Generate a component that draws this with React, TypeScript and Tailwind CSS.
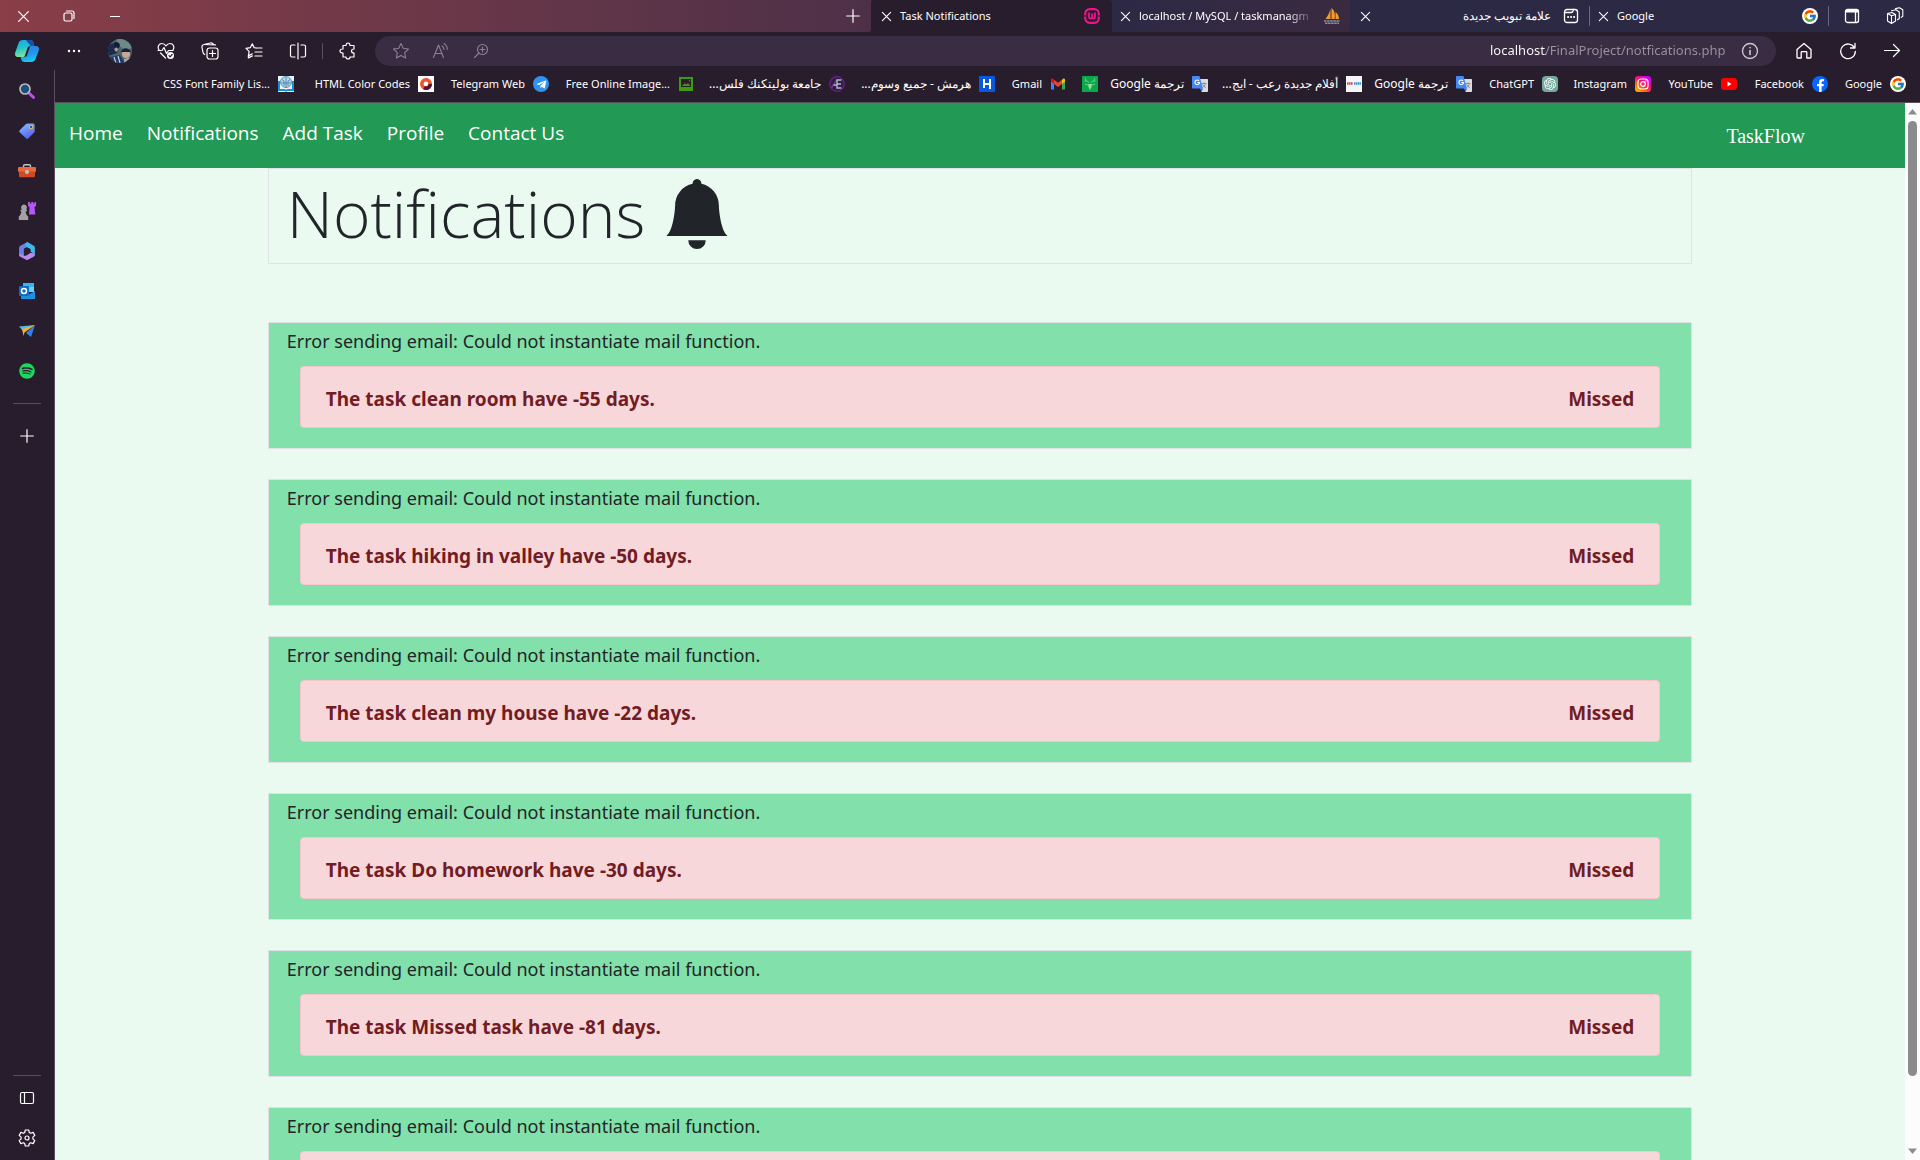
import React from "react";
import { FcGoogle } from "react-icons/fc";
import { BsBellFill } from "react-icons/bs";
import { FaFacebookF, FaSpotify, FaTelegramPlane } from "react-icons/fa";
import { SiOpenai } from "react-icons/si";

type Icon = React.ReactNode;

const stroke = {
  fill: "none",
  stroke: "currentColor",
  strokeLinecap: "round" as const,
  strokeLinejoin: "round" as const,
};

/* ---------- toolbar icons ---------- */

const CloseIcon = ({ size = 11 }: { size?: number }) => (
  <svg width={size} height={size} viewBox="0 0 12 12" {...stroke} strokeWidth={1.2}>
    <path d="M1.5 1.5l9 9M10.5 1.5l-9 9" />
  </svg>
);

const CopilotIcon = () => (
  <svg width="26" height="24" viewBox="0 0 26 24">
    <defs>
      <linearGradient id="cpA" x1="0" y1="0" x2="0.2" y2="1">
        <stop offset="0" stopColor="#1aa7ea" />
        <stop offset="0.5" stopColor="#22c3c8" />
        <stop offset="1" stopColor="#7fe3a0" />
      </linearGradient>
      <linearGradient id="cpB" x1="0" y1="0" x2="0.3" y2="1">
        <stop offset="0" stopColor="#2f7be8" />
        <stop offset="0.6" stopColor="#2196ea" />
        <stop offset="1" stopColor="#18c8ee" />
      </linearGradient>
    </defs>
    <path d="M9 1h7c2 0 3 1.200 3.500 3l.7 2.500h-3.200c-1.800 0-2.800 1-3.300 2.800L12 15.500C11.500 17 10.500 18 9 18H4c-2.500 0-3.500-2-2.800-4.500L4.600 4C5.200 2 6.800 1 9 1z" fill="url(#cpA)" />
    <path d="M12 1h4c2 0 3 1.200 3.500 3l.7 2.500h-3.500C15 5 13.500 3 12 1z" fill="#1450a8" />
    <path d="M17 7h5c2.500 0 3.500 2 2.800 4.500L21.500 20c-.6 2-2 3-4 3h-7c-1.800 0-2.800-1-3.300-2.800L6.600 18H9c1.800 0 2.800-1 3.300-2.600l1.700-5.900C14.500 8 15.500 7 17 7z" fill="url(#cpB)" />
    <path d="M16 8l-3.500 9.500h-2L14 8z" fill="#281d2c" />
  </svg>
);

const Avatar = () => (
  <svg width="24" height="24" viewBox="0 0 24 24">
    <clipPath id="av"><circle cx="12" cy="12" r="12" /></clipPath>
    <g clipPath="url(#av)">
      <rect width="24" height="24" fill="#4c6470" />
      <path d="M8 0h16v9l-7 2-7-5z" fill="#6c8a88" />
      <path d="M0 6l6-2 4 3-1 7-9 3z" fill="#1c2b4d" />
      <path d="M6 10l3-2 1 3-2 2z" fill="#b89a90" />
      <path d="M6 4c2-2 5-1 6 2l-1 3-4-1z" fill="#131c33" />
      <circle cx="18" cy="15" r="4" fill="#c9a795" />
      <path d="M13 13c1-5 8-5 10 0l-5 0z" fill="#1a2038" />
      <path d="M2 18l10-2 5 8H3z" fill="#233763" />
      <path d="M6 18l2 6M10 17l2 7" stroke="#c3cede" strokeWidth="1.200" />
      <path d="M16 20l8-2v6h-8z" fill="#a8a7a0" />
    </g>
  </svg>
);

const HeartPulseIcon = () => (
  <svg width="18" height="18" viewBox="0 0 18 18" {...stroke} strokeWidth={1.2}>
    <path d="M2 8C0 4.500 2 1.500 5 1.500c1.800 0 3 1 4 2.300 1-1.300 2.200-2.300 4-2.300 3 0 5 3 3 6.500M3.500 11l5 5" />
    <path d="M1 8.500h4l2-3 2.500 6 2-3h4.500" />
    <circle cx="13.500" cy="13.500" r="3.500" fill="#fff" stroke="none" />
    <path d="M12 13.700l1.100 1.100 2-2.300" stroke="#281d2c" />
  </svg>
);

const CollectionsIcon = () => (
  <svg width="18" height="18" viewBox="0 0 18 18" {...stroke} strokeWidth={1.2}>
    <rect x="6" y="6" width="11" height="11" rx="2.500" />
    <path d="M11.500 8.500v6M8.500 11.500h6M3.800 12.500C2.500 12 2.200 11.300 2 10.300L1 5.500C.7 4 1.500 2.800 3 2.500L9.500 1c1.500-.3 2.700.4 3.200 2M3.500 2.500l11 .3" />
  </svg>
);

const FavoritesIcon = () => (
  <svg width="18" height="18" viewBox="0 0 18 18" {...stroke} strokeWidth={1.2}>
    <path d="M11 6L9.200 5.700 7.300 1.800 5.300 5.700 1 6.400l3.100 3-.7 4.500 3.900-2.100" />
    <path d="M11.500 6h5.500M10 10h7M10 14h7M3.400 13.900v2l4-2" />
  </svg>
);

const SplitIcon = () => (
  <svg width="18" height="18" viewBox="0 0 18 18" {...stroke} strokeWidth={1.2}>
    <path d="M6 3H3C2 3 1.500 3.500 1.500 4.500v9c0 1 .5 1.500 1.500 1.500h3M12 3h3c1 0 1.500.5 1.500 1.500v9c0 1-.5 1.500-1.500 1.500h-3M9 1v16" />
  </svg>
);

const PuzzleIcon = () => (
  <svg width="18" height="18" viewBox="0 0 18 18" {...stroke} strokeWidth={1.200}>
    <path d="M4 3.500h3c0-1.700.9-2.500 2-2.500s2 .8 2 2.500h4V7c-1.700 0-2.500.9-2.500 2s.8 2 2.500 2v4h-4c0 1.300-.9 2-2 2s-2-.7-2-2H4v-4c-1.800 0-3-.7-3-2s1.200-2 3-2z" />
  </svg>
);

const StarIcon = () => (
  <svg width="18" height="18" viewBox="0 0 18 18" {...stroke} strokeWidth={1.100}>
    <path d="M9 1.500l2.300 4.800 5.200.7-3.800 3.700.9 5.300L9 13.500 4.400 16l.9-5.300L1.500 7l5.200-.7z" />
  </svg>
);

const ReadAloudIcon = () => (
  <svg width="18" height="18" viewBox="0 0 18 18" {...stroke} strokeWidth={1.100}>
    <path d="M1.500 15.500L6.500 3l5 12.500M3.200 11.500h6.600M10 4c1.500.8 2 2 2 3.500M12 1.500c2.200 1.300 3.300 3.500 3.200 6" />
  </svg>
);

const ZoomIcon = () => (
  <svg width="16" height="16" viewBox="0 0 16 16" {...stroke} strokeWidth={1.100}>
    <circle cx="9.500" cy="6.500" r="5" />
    <path d="M9.500 4v5M7 6.500h5M6 10l-4.500 4.500" />
  </svg>
);

const InfoIcon = () => (
  <svg width="18" height="18" viewBox="0 0 18 18" {...stroke} strokeWidth={1.300}>
    <circle cx="9" cy="9" r="7.500" />
    <path d="M9 8.500v4M9 5.500v.2" strokeWidth={1.600} />
  </svg>
);

const HomeIcon = () => (
  <svg width="18" height="18" viewBox="0 0 18 18" {...stroke} strokeWidth={1.300}>
    <path d="M2 7.500L9 1.500l7 6v7.700c0 .5-.3.800-.8.800h-3.400v-5.500c0-.5-.3-.8-.8-.8H7c-.5 0-.8.300-.8.800V16H2.800c-.5 0-.8-.3-.8-.8z" />
  </svg>
);

const ReloadIcon = () => (
  <svg width="18" height="18" viewBox="0 0 18 18" {...stroke} strokeWidth={1.300}>
    <path d="M15.500 6A7.300 7.300 0 1 0 16.300 9.500M16 1.500V6h-4.500" />
  </svg>
);

const ForwardIcon = () => (
  <svg width="18" height="18" viewBox="0 0 18 18" {...stroke} strokeWidth={1.200}>
    <path d="M1.500 8.500h15M10.500 2.500l6 6-6 6" />
  </svg>
);

/* ---------- site icons, 16px ---------- */

const box = { width: 16, height: 16, viewBox: "0 0 16 16" };

const GoogleBadge = () => (
  <span className="flex h-4 w-4 shrink-0 items-center justify-center rounded-full bg-white">
    <FcGoogle size={14} />
  </span>
);

const FacebookBadge = () => (
  <span className="flex h-4 w-4 shrink-0 items-end justify-center overflow-hidden rounded-full bg-[#0866ff] text-white">
    <FaFacebookF size={13} />
  </span>
);

const YouTubeBadge = () => (
  <svg {...box}><rect y="2" width="16" height="12" rx="3" fill="#f00" /><path d="M6.500 5.500v5l4-2.500z" fill="#fff" /></svg>
);

const InstagramBadge = () => (
  <svg {...box}>
    <defs>
      <linearGradient id="ig" x1="0" y1="1" x2="0.800" y2="0">
        <stop offset="0" stopColor="#ffc800" />
        <stop offset="0.350" stopColor="#ff6a00" />
        <stop offset="0.600" stopColor="#ff0f70" />
        <stop offset="1" stopColor="#c800ff" />
      </linearGradient>
    </defs>
    <rect width="16" height="16" rx="3" fill="url(#ig)" />
    <rect x="3" y="3" width="10" height="10" rx="3" fill="none" stroke="#fff" strokeWidth="1.200" />
    <circle cx="8" cy="8" r="2.300" fill="none" stroke="#fff" strokeWidth="1.200" />
    <circle cx="11" cy="5" r="0.700" fill="#fff" />
  </svg>
);

const ChatBadge = () => (
  <span className="flex h-4 w-4 shrink-0 items-center justify-center rounded-sm bg-[#74aa9c] text-white">
    <SiOpenai size={12} />
  </span>
);

const TranslateBadge = () => (
  <svg {...box}>
    <path d="M6 3h9c.600 0 1 .400 1 1v11c0 .600-.400 1-1 1H9.500z" fill="#dcdcdc" />
    <path d="M9.500 7.500h5M12 6.500v1M13.500 7.500c-.5 2-2 3.500-3.500 4.500M10.700 8.500c.8 1.600 2 2.700 3.300 3.500" fill="none" stroke="#7a8a96" strokeWidth="0.900" />
    <path d="M8 12.500h3L9.500 16z" fill="#3367d6" />
    <path d="M1 0h6.500L11 12.500H1c-.600 0-1-.4-1-1V1c0-.6.400-1 1-1z" fill="#4587f4" />
    <path d="M7 4.800A2.300 2.300 0 1 0 7.500 6.500H5.300" fill="none" stroke="#fff" strokeWidth="1.100" />
  </svg>
);

const CinemaBadge = () => (
  <svg {...box}>
    <rect width="16" height="16" fill="#f5f5f8" />
    <path d="M1 7.500h6" stroke="#d8484a" strokeWidth="2.600" strokeDasharray="1.500 .4" />
    <path d="M8 7.500h7" stroke="#3a94d8" strokeWidth="2.600" strokeDasharray="1.500 .4" />
  </svg>
);

const DeerBadge = () => (
  <svg {...box}>
    <rect width="16" height="16" fill="#0ba84a" />
    <path d="M3 2l1.500 3L7 6.500M13 2l-1.500 3L9 6.500M2.500 5h2M13.500 5h-2M3 8l3 1M13 8l-3 1" stroke="#6fd491" strokeWidth="0.900" fill="none" />
    <path d="M6 8h4l-.5 3L8 14l-1.500-3z" fill="#8fe0a8" />
  </svg>
);

const GmailBadge = () => (
  <svg {...box}>
    <path d="M1 4v9.500h3V6.500z" fill="#4285f4" />
    <path d="M15 4v9.500h-3V6.500z" fill="#34a853" />
    <path d="M12 3.800V8l3-2.300V4c0-1.800-1.700-2.200-3-.2z" fill="#fbbc04" />
    <path d="M4 3.800V8L1 5.700V4c0-1.800 1.700-2.200 3-.2z" fill="#c5221f" />
    <path d="M4 3.700L8 6.800l4-3.100V8l-4 3-4-3z" fill="#ea4335" />
  </svg>
);

const HermesBadge = () => (
  <svg {...box}>
    <rect width="16" height="16" rx="1" fill="#0759e0" />
    <path d="M5 3v9M11 3v10M5 8h6" stroke="#fff" strokeWidth="2" fill="none" />
  </svg>
);

const PolytechnicBadge = () => (
  <svg {...box}>
    <circle cx="8" cy="8" r="7.300" fill="#2c2145" stroke="#6a1f8c" strokeWidth="1.300" />
    <path d="M2.500 12L7.500 4" stroke="#8a2bb0" strokeWidth="1.300" />
    <path d="M12.500 4H8v8h4.500M8 8h4M4.500 9H8" stroke="#b9b3c4" strokeWidth="1.400" fill="none" />
  </svg>
);

const ImageBadge = () => (
  <svg {...box}>
    <path d="M1 1h14v14H1z" fill="#3f9a10" />
    <path d="M3 3h10v8H3z" fill="#281d2c" />
    <path d="M4 10l2.500-2.800 1.700 1.300L10 7l2.500 3z" fill="#3f9a10" />
    <circle cx="11.500" cy="4.800" r="0.700" fill="#3f9a10" />
  </svg>
);

const TelegramBadge = () => (
  <span className="flex h-4 w-4 shrink-0 items-center justify-center rounded-full bg-[#2f93f3] text-white">
    <FaTelegramPlane size={11} />
  </span>
);

const ColorRingBadge = () => (
  <svg {...box}>
    <rect width="16" height="16" fill="#fff" />
    <circle cx="8" cy="8" r="4.200" fill="none" stroke="#f0532d" strokeWidth="3.600" />
    <path d="M12.200 8A4.200 4.200 0 0 1 6 11.700" fill="none" stroke="#5a1238" strokeWidth="3.600" />
  </svg>
);

const BookBadge = () => (
  <svg {...box}>
    <rect width="16" height="16" fill="#e6f3fa" />
    <path d="M0 5h2v8h5l1 1 1-1h5V5h2v10H9l-1 1-1-1H0z" fill="#1c8ed0" />
    <circle cx="8" cy="6" r="5.500" fill="#b9d8ea" stroke="#4d84aa" strokeWidth="0.800" />
    <path d="M8 1v11M4 3.500l2 1.500v5M12 3.500L10 5v5M3 7h10" stroke="#3f79a4" strokeWidth="0.800" fill="none" />
  </svg>
);

const WampBadge = () => (
  <svg {...box} fill="none" stroke="#f0118c">
    <rect x="1.200" y="1.200" width="13.600" height="13.600" rx="4.500" strokeWidth="2.200" />
    <path d="M5 4.500v4.500c0 1 .5 1.500 1.500 1.500S8 10 8 9V5.500V9c0 1 .5 1.500 1.500 1.500S11 10 11 9V4.500" strokeWidth="1.800" />
    <path d="M0 8h2.500M13.500 8H16" stroke="#281d2c" strokeWidth="1" />
  </svg>
);

const SailBadge = () => (
  <svg {...box}>
    <path d="M6.500 1v10H1.500C3.500 8 5.500 5 6.500 1zM7.500 0c3 2 4 7 3 11h-3zM11.500 4c2.500 2 3.500 4.500 3.500 7h-3.500z" fill="#f59a22" />
    <path d="M0 13h16M1 15.300h14" stroke="#8b90a8" strokeWidth="1.500" strokeDasharray="2.500 .6" />
  </svg>
);

const NewTabIcon = () => (
  <svg {...box} {...stroke} strokeWidth={1.300}>
    <rect x="1.500" y="1.500" width="13" height="13" rx="2.500" />
    <path d="M1.500 4.500h7c1 0 1.200-.5 1.500-1.500l.3-1.500" />
    <path d="M5 9h.2M8 9h.2M11 9h.2" strokeWidth={1.900} />
  </svg>
);

/* ---------- sidebar icons ---------- */

const SearchApp = () => (
  <svg {...box}>
    <path d="M10.500 10.500l4 4" stroke="#c84df0" strokeWidth="2.800" strokeLinecap="round" />
    <circle cx="6" cy="6" r="5" fill="#1d4f7c" stroke="#b9bcc0" strokeWidth="1.700" />
  </svg>
);

const TagApp = () => (
  <svg {...box}>
    <defs><linearGradient id="tg" x1="0" y1="0" x2="0.500" y2="1"><stop offset="0" stopColor="#84c4ff" /><stop offset="1" stopColor="#5a62f2" /></linearGradient></defs>
    <path d="M8.500.500H14c1 0 1.700.700 1.700 1.700v6c0 .6-.2 1-.6 1.400l-5.600 5.600c-.8.800-1.800.8-2.600 0L.900 9.500c-.8-.8-.8-1.800 0-2.600L7 1.100c.4-.4.9-.6 1.500-.6z" fill="url(#tg)" />
    <circle cx="12" cy="4" r="1.700" fill="#374b8c" stroke="#f1b62c" strokeWidth="1.100" />
  </svg>
);

const ToolboxApp = () => (
  <svg width="18" height="16" viewBox="0 0 18 16">
    <path d="M5.500 5V3c0-.8.5-1.300 1.300-1.300h4.400c.8 0 1.300.5 1.300 1.300v2" fill="none" stroke="#c4c1c1" strokeWidth="1.400" />
    <rect y="4" width="18" height="5" rx="1" fill="#ea6a3c" />
    <path d="M1 8.500h16V13c0 .800-.500 1.300-1.300 1.300H2.300C1.500 14.300 1 13.800 1 13z" fill="#cf4a22" />
    <circle cx="9" cy="9" r="2" fill="#c4c1c1" />
  </svg>
);

const GamesApp = () => (
  <svg width="18" height="18" viewBox="0 0 18 18">
    <path d="M10 0h2v1.500h1.300V0h2v1.500h1.200V0H18v4l-1.500 1 .8 7.500H11L11.500 5 10 4z" fill="#b556f5" />
    <path d="M6 2.500a3 3 0 0 1 2 5.200h1v1.500H7.700c.1 2.500.8 3.800 2.500 5.300V18H.8v-3.500c1.700-1.500 2.400-2.800 2.500-5.300H2.500V7.700H4A3 3 0 0 1 6 2.500z" fill="#a3a1a5" />
  </svg>
);

const M365App = () => (
  <svg width="18" height="18" viewBox="0 0 16 16">
    <path d="M8.500 0L1.700 3.600C1.200 4 1 4.300 1 5v6.500L5.300 14V6L9 4z" fill="#6f7fe6" />
    <path d="M8.500 0l5.800 3.600c.5.400.7.700.7 1.400v6l-4-2.500V6.300L6.500 4V1z" fill="#43b7ea" />
    <path d="M15 10.500v1c0 .6-.2 1-.7 1.300l-5.500 3c-.5.300-1.100.300-1.600 0L1.700 12.800C1.200 12.500 1 12 1 11.500V10l4 2.500 2.500-.5L11 9.500z" fill="#b48cf0" />
    <path d="M8 4.800l3 1.700v3L8 11.300 5.200 9.500v-3z" fill="#281d2c" />
  </svg>
);

const OutlookApp = () => (
  <svg {...box}>
    <path d="M4 0h11v9H4z" fill="#36b5f2" />
    <path d="M9 4h6v5H9z" fill="#64d0fb" />
    <path d="M2 8l7 4 7-4v8H3c-.6 0-1-.4-1-1z" fill="#1b8fe0" />
    <rect y="3" width="10" height="10" rx="1" fill="#0a6dc7" />
    <circle cx="5" cy="8" r="2.500" fill="none" stroke="#fff" strokeWidth="1.500" />
  </svg>
);

const DropApp = () => (
  <svg {...box}>
    <path d="M0 3.500L16 2 5 9z" fill="#54b7f5" />
    <path d="M16 2l-4 12-5-4z" fill="#2f83e6" />
    <path d="M3 6L16 2 5.500 9.500 4.500 13z" fill="#f2b22a" />
  </svg>
);

const PlusIcon = () => (
  <svg width="14" height="14" viewBox="0 0 14 14" {...stroke} strokeWidth={1.200}>
    <path d="M7 .7v12.600M.7 7h12.600" />
  </svg>
);

const PanelIcon = () => (
  <svg width="16" height="16" viewBox="0 0 16 16" {...stroke} strokeWidth={1.200}>
    <rect x="1.500" y="2.500" width="13" height="11" rx="1.500" />
    <path d="M5.500 2.500v11" />
  </svg>
);

const GearIcon = () => (
  <svg width="18" height="18" viewBox="0 0 18 18" {...stroke} strokeWidth={1.200}>
    <path d="M7.300 1h3.400l.6 2.500 1.300.8 2.500-.9 1.700 3-1.900 1.700v1.800l1.900 1.700-1.700 3-2.500-.9-1.300.8-.6 2.500H7.300l-.6-2.500-1.300-.8-2.500.9-1.700-3 1.900-1.700V8.100L1.200 6.400l1.700-3 2.500.9 1.300-.8z" />
    <circle cx="9" cy="9" r="2" />
  </svg>
);

/* ---------- data ---------- */

const bookmarks: { label: string; icon: Icon; width: string; arabic?: boolean }[] = [
  { label: "CSS Font Family Lis...", icon: <BookBadge />, width: "w-[140px]" },
  { label: "HTML Color Codes", icon: <ColorRingBadge />, width: "w-[140px]" },
  { label: "Telegram Web", icon: <TelegramBadge />, width: "w-[115px]" },
  { label: "Free Online Image...", icon: <ImageBadge />, width: "w-[145px]" },
  { label: "جامعة بوليتكنك فلس...", icon: <PolytechnicBadge />, width: "w-[151px]", arabic: true },
  { label: "هرمش - جميع وسوم...", icon: <HermesBadge />, width: "w-[150px]", arabic: true },
  { label: "Gmail", icon: <GmailBadge />, width: "w-[71px]" },
  { label: "", icon: <DeerBadge />, width: "w-[32px]" },
  { label: "ترجمة Google", icon: <TranslateBadge />, width: "w-[110px]", arabic: true },
  { label: "أفلام جديدة رعب - ايج...", icon: <CinemaBadge />, width: "w-[154px]", arabic: true },
  { label: "ترجمة Google", icon: <TranslateBadge />, width: "w-[110px]", arabic: true },
  { label: "ChatGPT", icon: <ChatBadge />, width: "w-[86px]" },
  { label: "Instagram", icon: <InstagramBadge />, width: "w-[93px]" },
  { label: "YouTube", icon: <YouTubeBadge />, width: "w-[86px]" },
  { label: "Facebook", icon: <FacebookBadge />, width: "w-[91px]" },
  { label: "Google", icon: <GoogleBadge />, width: "w-[78px]" },
];

const apps: { name: string; icon: Icon }[] = [
  { name: "Search", icon: <SearchApp /> },
  { name: "Shopping", icon: <TagApp /> },
  { name: "Tools", icon: <ToolboxApp /> },
  { name: "Games", icon: <GamesApp /> },
  { name: "Microsoft 365", icon: <M365App /> },
  { name: "Outlook", icon: <OutlookApp /> },
  { name: "Drop", icon: <DropApp /> },
  { name: "Spotify", icon: <FaSpotify size={16} className="text-[#1ed760]" /> },
];

const tools: { name: string; icon: Icon; width: string }[] = [
  { name: "More", icon: <svg width="14" height="4" viewBox="0 0 14 4" fill="#fff"><circle cx="2" cy="2" r="1.200" /><circle cx="7" cy="2" r="1.200" /><circle cx="12" cy="2" r="1.200" /></svg>, width: "w-[46px]" },
  { name: "Account", icon: <Avatar />, width: "w-[46px]" },
  { name: "Browser essentials", icon: <HeartPulseIcon />, width: "w-[45px]" },
  { name: "Collections", icon: <CollectionsIcon />, width: "w-[44px]" },
  { name: "Favorites", icon: <FavoritesIcon />, width: "w-[44px]" },
  { name: "Split screen", icon: <SplitIcon />, width: "w-[44px]" },
];

const tasks: { text?: string; status?: string }[] = [
  { text: "The task clean room have -55 days.", status: "Missed" },
  { text: "The task hiking in valley have -50 days.", status: "Missed" },
  { text: "The task clean my house have -22 days.", status: "Missed" },
  { text: "The task Do homework have -30 days.", status: "Missed" },
  { text: "The task Missed task have -81 days.", status: "Missed" },
  {},
];

const iconButton = "flex shrink-0 items-center justify-center";

/* ---------- browser frame ---------- */

function TabStrip() {
  return (
    <div className="flex h-8 shrink-0 bg-[#2c2945] text-[11px] text-white">
      <div className="flex min-w-0 flex-1 items-center rounded-br bg-linear-to-r from-[#8a3e47] to-[#4d3048]">
        <button aria-label="Close window" className={`${iconButton} h-8 w-[46px]`}><CloseIcon size={13} /></button>
        <button aria-label="Restore" className={`${iconButton} h-8 w-[46px]`}>
          <svg width="12" height="12" viewBox="0 0 12 12" {...stroke} strokeWidth={1.200}><rect x="1" y="3" width="8" height="8" rx="1.500" /><path d="M3.500 1H9c1.200 0 2 .8 2 2v5.500" /></svg>
        </button>
        <button aria-label="Minimize" className={`${iconButton} h-8 w-[46px]`}><span className="h-px w-2.5 bg-white" /></button>
        <button aria-label="New tab" className={`${iconButton} mr-0.5 ml-auto h-8 w-8`}><PlusIcon /></button>
      </div>
      <div className="flex w-[241px] shrink-0 items-center rounded-t bg-[#281d2c] pr-3 pl-2.5">
        <button aria-label="Close tab" className={iconButton}><CloseIcon /></button>
        <span className="ml-2 flex-1 truncate">Task Notifications</span>
        <WampBadge />
      </div>
      <div className="flex w-[238px] shrink-0 items-center rounded-br bg-linear-to-r from-[#2c2945] to-[#3a2a40] pr-2.5 pl-2">
        <button aria-label="Close tab" className={iconButton}><CloseIcon /></button>
        <span className="ml-2 flex-1 whitespace-nowrap mask-r-from-80% mask-r-to-95%">localhost / MySQL / taskmanagm</span>
        <SailBadge />
      </div>
      <div className="flex w-[239px] shrink-0 items-center pr-2.5 pl-2.5">
        <button aria-label="Close tab" className={iconButton}><CloseIcon /></button>
        <span dir="rtl" className="mr-3 ml-2 flex-1 truncate text-[12px]">علامة تبويب جديدة</span>
        <NewTabIcon />
      </div>
      <div className="flex w-[239px] shrink-0 items-center pr-2.5">
        <span className="mr-2 h-5 w-px bg-[#69677a]" />
        <button aria-label="Close tab" className={iconButton}><CloseIcon /></button>
        <span className="ml-2 flex-1">Google</span>
        <GoogleBadge />
      </div>
      <div className="flex w-[92px] shrink-0 items-center">
        <span className="h-5 w-px bg-[#69677a]" />
        <button aria-label="Tab actions" className={`${iconButton} h-8 w-[46px]`}>
          <svg {...box} {...stroke} strokeWidth={1.300}><rect x="1.500" y="1.500" width="13" height="13" rx="2" /><path d="M2.500 3h11" strokeWidth={3} /><path d="M11.500 4v10" /></svg>
        </button>
        <button aria-label="Workspaces" className={`${iconButton} h-8 w-10`}>
          <svg width="18" height="18" viewBox="0 0 18 18" {...stroke} strokeWidth={1.100}><path d="M1.500 6.500L6 5.500l3.500 2v6.500L5.500 16.500l-4-2.500zM1.500 6.500l4 2.200v7.800M5.500 8.700l4-1.200M5.500 3.800l4.500-1L13.300 5v6.500l-1.800 1.300M9.500 1.600l4-.9 3.300 2v6.500l-1.600 1.200" /></svg>
        </button>
      </div>
    </div>
  );
}

function Toolbar() {
  return (
    <div className="flex h-[38px] shrink-0 items-center text-white">
      <button aria-label="Copilot" className={`${iconButton} h-8 w-[51px] pl-0.5`}><CopilotIcon /></button>
      {tools.map((tool) => (
        <button key={tool.name} aria-label={tool.name} className={`${iconButton} h-8 ${tool.width}`}>{tool.icon}</button>
      ))}
      <span className="ml-0.5 h-4 w-px shrink-0 bg-[#5a4f60]" />
      <button aria-label="Extensions" className={`${iconButton} h-8 w-[50px]`}><PuzzleIcon /></button>
      <div className="mx-0.5 flex h-[30px] min-w-0 flex-1 items-center rounded-full bg-[#3a2c43] pr-3 pl-1.5 text-[#8b8290]">
        <button aria-label="Add to favorites" className={`${iconButton} h-7 w-10`}><StarIcon /></button>
        <button aria-label="Read aloud" className={`${iconButton} h-7 w-10`}><ReadAloudIcon /></button>
        <button aria-label="Zoom" className={`${iconButton} h-7 w-10`}><ZoomIcon /></button>
        <input
          aria-label="Address"
          defaultValue="localhost/FinalProject/notfications.php"
          className="ml-auto w-[236px] bg-linear-to-r from-white from-[56px] to-[#9b939f] to-[56px] bg-clip-text text-[13px] text-transparent outline-none"
        />
        <button aria-label="Site information" className={`${iconButton} ml-2.5 h-7 w-7 text-[#cfcad2]`}><InfoIcon /></button>
      </div>
      <button aria-label="Home" className={`${iconButton} ml-1 h-8 w-11`}><HomeIcon /></button>
      <button aria-label="Reload" className={`${iconButton} h-8 w-11`}><ReloadIcon /></button>
      <button aria-label="Forward" className={`${iconButton} mr-1.5 h-8 w-11`}><ForwardIcon /></button>
    </div>
  );
}

function BookmarkBar() {
  return (
    <nav aria-label="Bookmarks" className="flex h-[33px] shrink-0 items-center justify-end border-b border-[#57505c] pr-3.5 pb-1 text-[11px] text-white">
      {bookmarks.map((b, i) => (
        <a key={i} href="#" aria-label={b.label || "Bookmark"} className={`flex shrink-0 items-center justify-end gap-2 whitespace-nowrap ${b.width}`}>
          {b.label && (
            <span dir={b.arabic ? "rtl" : "ltr"} className={b.arabic ? "text-[12px]" : "text-[11px]"}>
              {b.label}
            </span>
          )}
          {b.icon}
        </a>
      ))}
    </nav>
  );
}

function Sidebar() {
  return (
    <aside className="flex w-[55px] shrink-0 flex-col items-center border-r border-[#57505c] pt-px pb-0.5 text-white">
      {apps.map((app) => (
        <button key={app.name} aria-label={app.name} className={`${iconButton} h-10 w-10`}>{app.icon}</button>
      ))}
      <span className="my-3 h-px w-7 bg-[#57505c]" />
      <button aria-label="Customize" className={`${iconButton} h-10 w-10`}><PlusIcon /></button>
      <span className="mt-auto mb-0.5 h-px w-7 bg-[#57505c]" />
      <button aria-label="Toggle sidebar" className={`${iconButton} h-10 w-10`}><PanelIcon /></button>
      <button aria-label="Settings" className={`${iconButton} h-10 w-10`}><GearIcon /></button>
    </aside>
  );
}

function Scrollbar() {
  return (
    <div aria-hidden="true" className="flex w-[15px] shrink-0 flex-col items-center bg-[#fcfcfc] pt-1.5 pb-1.5">
      <svg width="9" height="6" viewBox="0 0 9 6"><path d="M4.500 0L9 5.500H0z" fill="#8b8b8b" /></svg>
      <span className="mt-1.5 h-[955px] w-[9px] rounded-full bg-[#8b8b8b]" />
      <svg className="mt-auto" width="9" height="6" viewBox="0 0 9 6"><path d="M4.500 6L9 .5H0z" fill="#8b8b8b" /></svg>
    </div>
  );
}

/* ---------- page ---------- */

function SiteHeader() {
  return (
    <header className="flex h-[65px] shrink-0 items-center justify-between bg-[#229954] pr-[100px] pl-3.5 text-white">
      <nav className="flex gap-6 pb-1 font-['Open_Sans',sans-serif] text-[19px]">
        <a href="#">Home</a>
        <a href="#">Notifications</a>
        <a href="#">Add Task</a>
        <a href="#">Profile</a>
        <a href="#">Contact Us</a>
      </nav>
      <a href="#" className="font-['Liberation_Serif',serif] text-[20px]">TaskFlow</a>
    </header>
  );
}

function TaskCard({ text, status }: { text?: string; status?: string }) {
  return (
    <section className="mb-[30px] h-[127px] border border-[#dee2e6] bg-[#82e0aa] text-[#212529]">
      <p className="px-[18px] pt-0.5 text-[18px] leading-8">Error sending email: Could not instantiate mail function.</p>
      <div className="mx-[31px] mt-[9px] flex h-[62px] items-center justify-between rounded border border-[#f5c6cb] bg-[#f8d7da] px-[25px] pt-1 text-[19px] font-bold text-[#721c24]">
        {text && <span>{text}</span>}
        {status && <span>{status}</span>}
      </div>
    </section>
  );
}

export default function App() {
  return (
    <div className="flex h-screen w-full flex-col overflow-hidden bg-[#281d2c] font-['Noto_Sans','Open_Sans',sans-serif]">
      <TabStrip />
      <Toolbar />
      <div className="flex min-h-0 flex-1">
        <Sidebar />
        <div className="flex min-w-0 flex-1 flex-col">
          <BookmarkBar />
          <div className="flex min-h-0 flex-1">
            <div className="flex min-w-0 flex-1 flex-col overflow-hidden bg-[#eafaf1]">
              <SiteHeader />
              <main className="mx-auto w-[77%]">
                <h1 className="mb-[58px] flex h-24 items-center gap-[17px] border border-[#dee2e6] px-[18px] pb-1 font-['Open_Sans',sans-serif] text-[64px] font-light text-[#212529]">
                  Notifications
                  <BsBellFill size={70} />
                </h1>
                {tasks.map((task, i) => (
                  <TaskCard key={i} {...task} />
                ))}
              </main>
            </div>
            <Scrollbar />
          </div>
        </div>
      </div>
    </div>
  );
}
